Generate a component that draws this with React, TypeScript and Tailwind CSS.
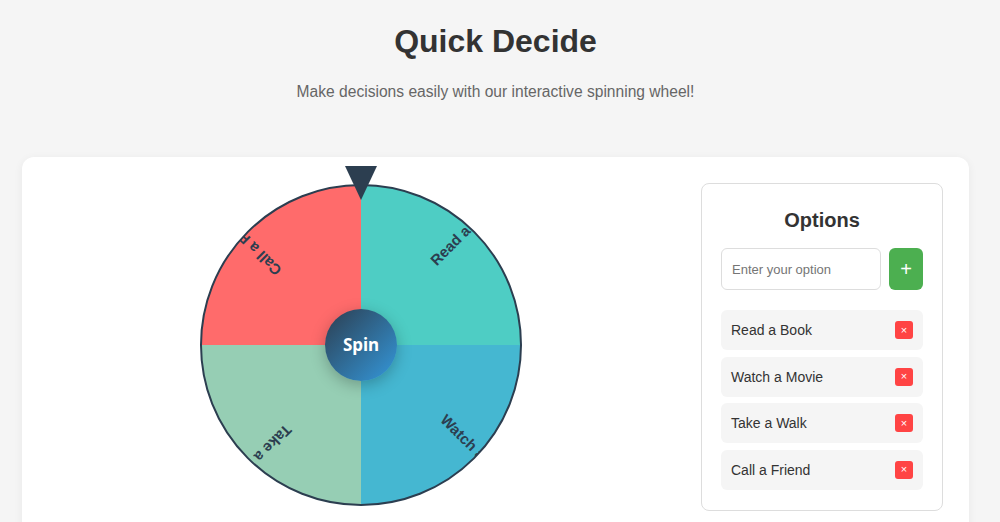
import { useState } from 'react'

const COLORS = ['#4ecdc4', '#45b7d1', '#96ceb4', '#ff6b6b']

function Wheel({ options }: { options: string[] }) {
  const size = 322
  const c = size / 2
  const r = 160
  const arc = 360 / options.length

  const slice = (i: number) => {
    const a0 = ((i * arc - 90) * Math.PI) / 180
    const a1 = (((i + 1) * arc - 90) * Math.PI) / 180
    const x0 = c + (r + 1) * Math.cos(a0)
    const y0 = c + (r + 1) * Math.sin(a0)
    const x1 = c + (r + 1) * Math.cos(a1)
    const y1 = c + (r + 1) * Math.sin(a1)
    return `M${c} ${c} L${x0} ${y0} A${r + 1} ${r + 1} 0 0 1 ${x1} ${y1} Z`
  }

  return (
    <div className="relative w-[322px] h-[322px]">
      {/* pointer */}
      <div className="absolute left-1/2 -translate-x-1/2 -top-[18px] z-10 w-0 h-0 border-l-[16px] border-r-[16px] border-t-[34px] border-l-transparent border-r-transparent border-t-[#2c3e50]" />

      <svg width={size} height={size} viewBox={`0 0 ${size} ${size}`} className="block">
        <defs>
          <clipPath id="wheel-clip">
            <circle cx={c} cy={c} r={r} />
          </clipPath>
        </defs>
        <g clipPath="url(#wheel-clip)">
          {options.map((_, i) => (
            <path key={i} d={slice(i)} fill={COLORS[i % COLORS.length]} />
          ))}
          {options.map((opt, i) => (
            <text
              key={opt}
              x={109}
              y={-2}
              transform={`translate(${c} ${c}) rotate(${i * arc + arc / 2 - 90})`}
              fill="#2c3e50"
              fontSize={15}
              fontWeight={700}
              fontFamily='"Liberation Sans", Arial, sans-serif'
            >
              {opt}
            </text>
          ))}
        </g>
        <circle cx={c} cy={c} r={r} fill="none" stroke="#2c3e50" strokeWidth={2} />
      </svg>

      <button className="absolute left-1/2 top-1/2 -translate-x-1/2 -translate-y-1/2 w-[72px] h-[72px] rounded-full bg-[linear-gradient(135deg,#2c3e50,#3498db)] text-white text-[17px] font-bold font-['Noto_Sans',sans-serif] shadow-[0_4px_15px_rgba(0,0,0,0.25)]">
        Spin
      </button>
    </div>
  )
}

export default function App() {
  const [options] = useState(['Read a Book', 'Watch a Movie', 'Take a Walk', 'Call a Friend'])

  return (
    <div className="min-h-screen bg-[#f5f5f5] font-['Liberation_Sans',Arial,sans-serif] overflow-hidden">
      <div className="w-[991px]">
        <h1 className="pt-[20px] text-center text-[32px] leading-[42px] font-bold text-[#333]">Quick Decide</h1>
        <p className="mt-[18px] text-center text-[15.6px] leading-6 text-[#666]">
          Make decisions easily with our interactive spinning wheel!
        </p>

        <div className="mx-[22px] mt-[53px] bg-white rounded-xl shadow-[0_2px_10px_rgba(0,0,0,0.06)] flex gap-[25px] pl-6 pr-[26px] pt-[26px] pb-10">
          <div className="flex-1 flex justify-center pt-px">
            <Wheel options={options} />
          </div>

          <div className="w-[242px] shrink-0 border border-[#ddd] rounded-lg px-[19px] pt-5 pb-5">
            <h2 className="text-center text-xl leading-8 font-bold text-[#333]">Options</h2>
            <div className="mt-3 flex gap-2">
              <input
                placeholder="Enter your option"
                className="w-[160px] h-[42px] border border-[#ddd] rounded-md px-[10px] text-[13px] text-[#333] placeholder:text-[#757575] outline-none"
              />
              <button className="flex-1 h-[42px] rounded-md bg-[#4caf50] text-white text-xl leading-none">+</button>
            </div>
            <ul className="mt-5 flex flex-col gap-[6.5px]">
              {options.map((opt) => (
                <li key={opt} className="h-[40px] bg-[#f5f5f5] rounded-md flex items-center justify-between pl-[10px] pr-[10px]">
                  <span className="text-sm text-[#333]">{opt}</span>
                  <button className="w-[18px] h-[18px] rounded-[3px] bg-[#ff4444] text-white text-[11px] leading-none flex items-center justify-center">
                    ×
                  </button>
                </li>
              ))}
            </ul>
          </div>
        </div>
      </div>
    </div>
  )
}
